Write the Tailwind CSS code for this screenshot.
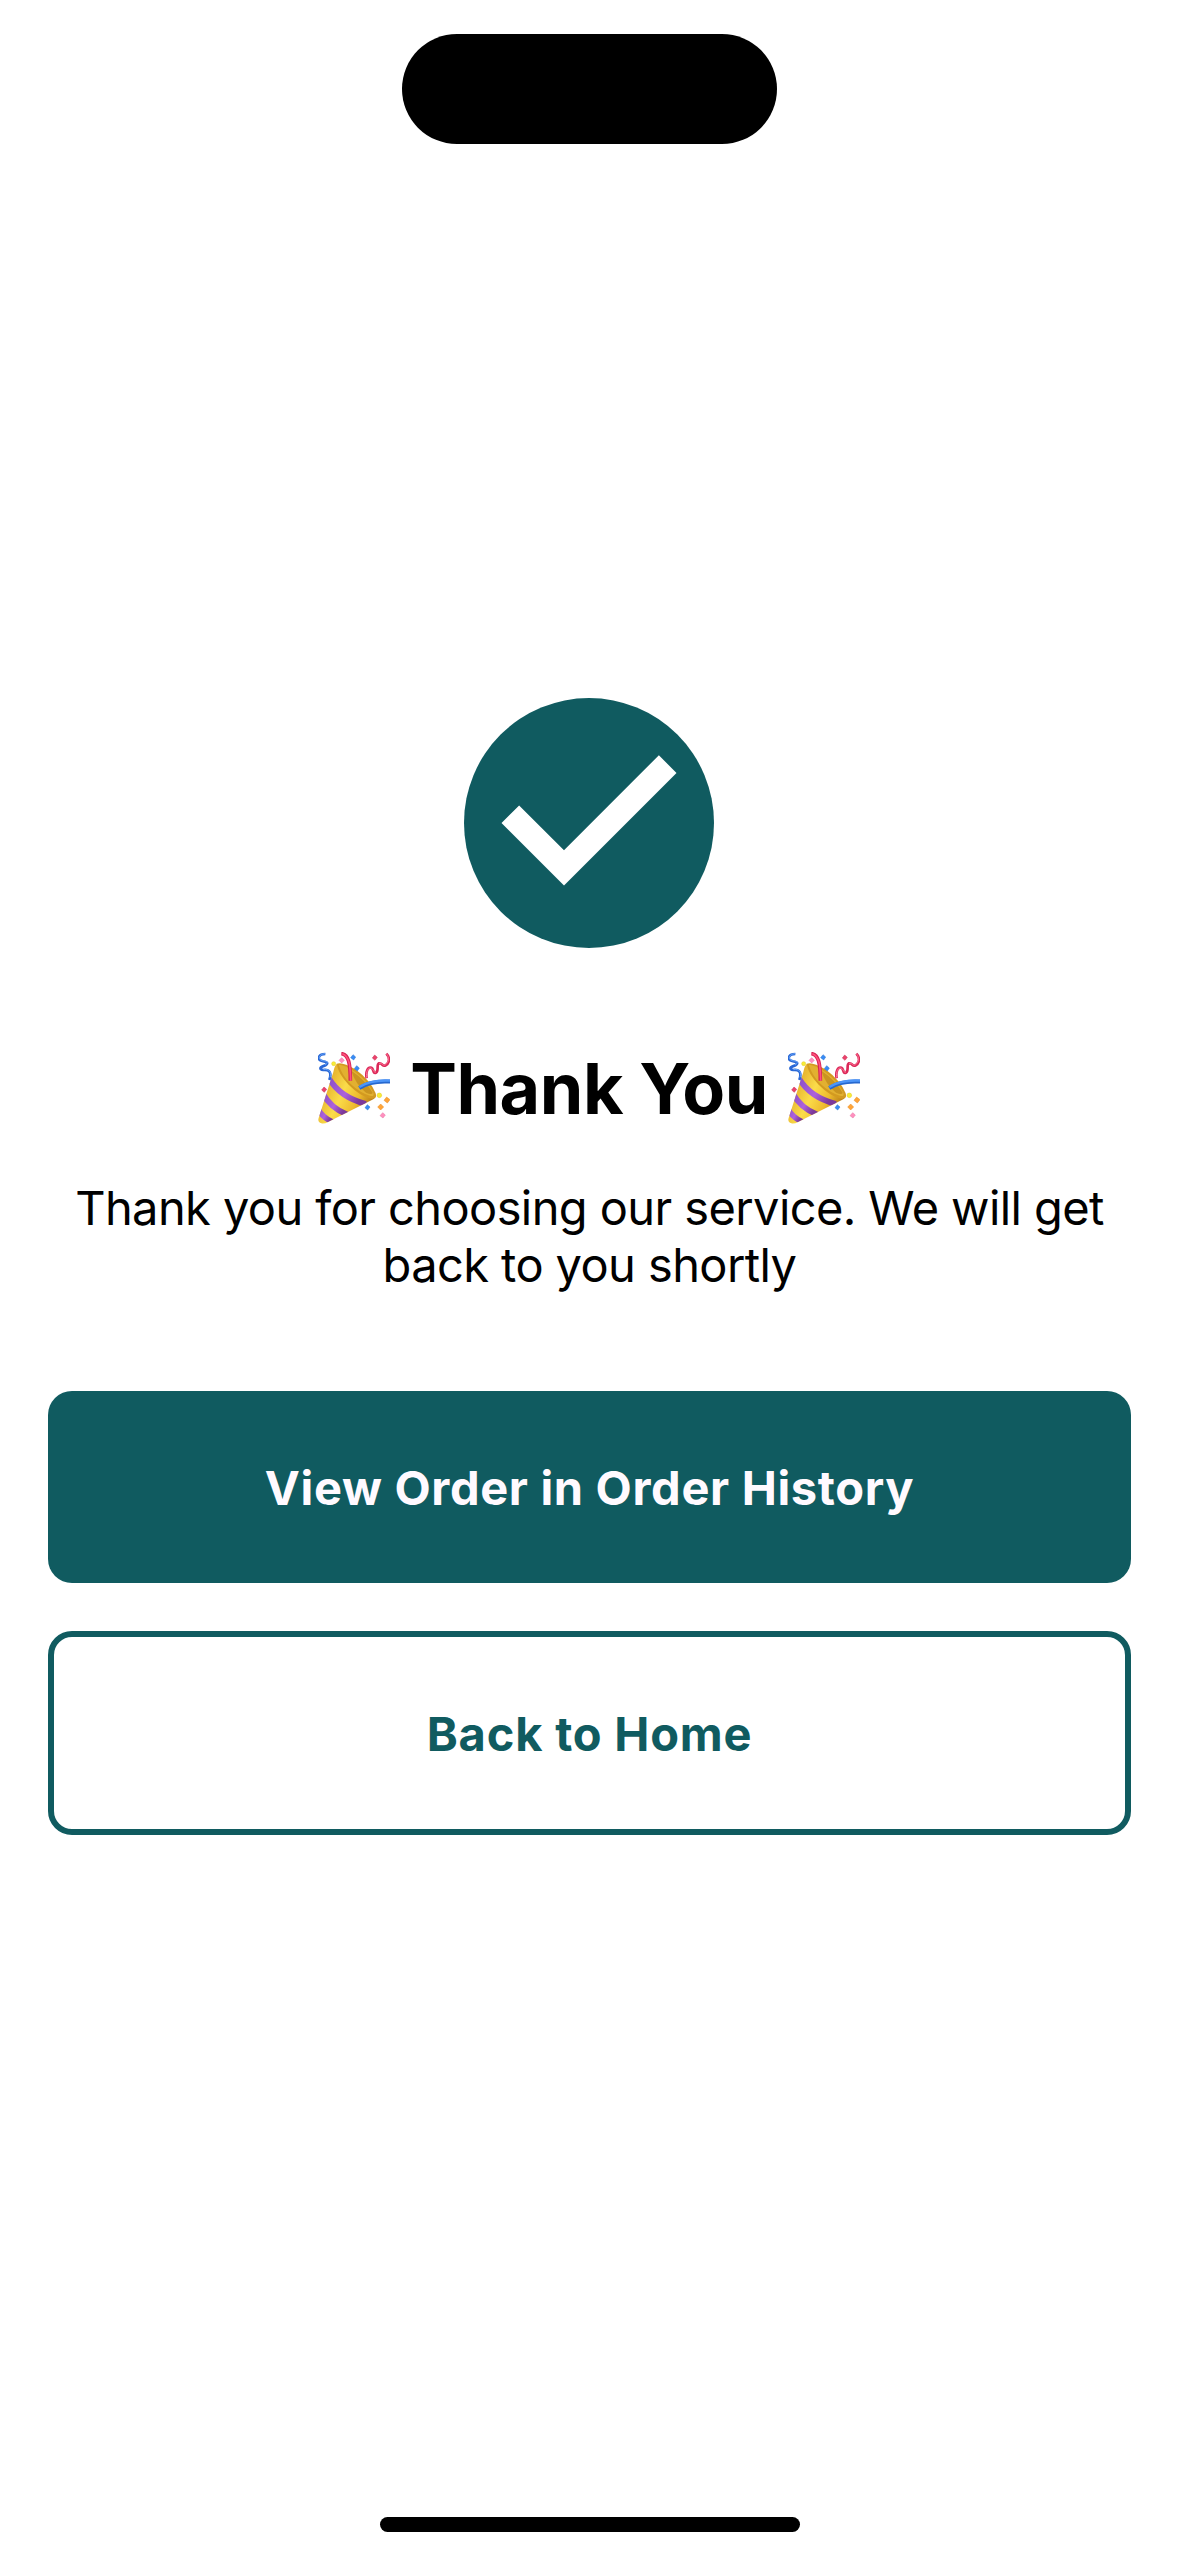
<!DOCTYPE html>
<html lang="en"><head><meta charset="utf-8"><title>Thank You</title>
<script src="https://cdn.jsdelivr.net/npm/@tailwindcss/browser@4"></script></head>
<body class="bg-white font-[Inter,sans-serif] text-black">
<svg class="absolute size-0"><defs>
<linearGradient id="gold" x1="0" y1="0.2" x2="1" y2="0.7"><stop offset="0" stop-color="#d99a1c"/><stop offset=".45" stop-color="#fbdc4a"/><stop offset=".7" stop-color="#eebb2e"/><stop offset="1" stop-color="#a8690f"/></linearGradient>
<linearGradient id="purple" x1="0" y1="0" x2="1" y2="0.5"><stop offset="0" stop-color="#8a4fc8"/><stop offset=".6" stop-color="#ad62dc"/><stop offset="1" stop-color="#7c3a9c"/></linearGradient>
<clipPath id="cone"><path d="M80 72Q74 76 70 96L26 234Q22 246 34 250Q44 252 54 246L190 178Q200 172 196 162Q150 150 80 72Z"/></clipPath>
<symbol id="popper" viewBox="24 36 216 216">
<path d="M80 72Q74 76 70 96L26 234Q22 246 34 250Q44 252 54 246L190 178Q200 172 196 162Q150 150 80 72Z" fill="url(#gold)"/>
<g clip-path="url(#cone)" fill="none" stroke="url(#purple)" stroke-width="17"><path d="M56 114Q90 172 168 192"/><path d="M38 160Q62 204 112 224"/><path d="M22 204Q36 232 68 246"/></g>
<path d="M80 71Q96 64 136 88Q182 122 197 160Q202 178 184 176Q152 170 116 134Q84 100 80 71Z" fill="#d39a20"/>
<path d="M86 74Q104 74 136 96Q174 124 190 158Q194 170 182 168Q152 160 122 132Q96 106 86 74Z" fill="#e2b030"/>
<path d="M124 92Q166 120 188 158Q186 166 168 158Q136 132 124 92Z" fill="#c99420"/>
<g fill="none">
<path d="M94 41Q110 42 116 64Q121 82 121 122" stroke="#d72455" stroke-width="11"/>
<path d="M97 41Q112 46 118 70Q121 88 122 122" stroke="#ff527c" stroke-width="5"/>
<path d="M148 144Q184 120 244 125" stroke="#2668cf" stroke-width="12"/>
<path d="M148 141Q184 118 244 122" stroke="#4c95f8" stroke-width="7"/>
<path d="M46 42C24 42 20 60 36 63C52 66 56 69 46 76C30 80 26 88 40 90C58 88 66 97 58 120" stroke="#2866d5" stroke-width="8"/>
<path d="M46 41C26 42 22 58 37 62C54 64 56 68 45 75M40 89C58 86 66 96 60 112" stroke="#6aa9fb" stroke-width="3"/>
<path d="M170 115C166 94 174 80 184 83C192 87 188 102 198 98C208 92 198 74 207 70C218 68 217 82 227 76C240 68 240 52 229 41" stroke="#db2858" stroke-width="8"/>
<path d="M170 113C167 94 175 82 183 84C192 88 190 99 198 96M207 70C218 68 218 80 227 74C237 66 238 52 230 42" stroke="#ff7597" stroke-width="3"/>
</g>
<g stroke-width="1.5">
<g fill="#f8ee36" stroke="#e2c725"><circle cx="71" cy="71" r="6"/><circle cx="208" cy="166" r="7"/></g>
<g fill="#ff8fbe" stroke="#e770a2"><path d="M95 53l8 8-8 8-8-8zM218 218l8 7-7 9-9-7z"/></g>
<g fill="#378cf5" stroke="#286fce"><path d="M129 44l8 7-6 9-9-7zM140 77l8 7-6 9-9-7zM172 194l8 7-7 9-8-7z"/></g>
<g fill="#ec426c" stroke="#c52c51"><path d="M194 45l8 7-7 9-8-7zM42 141l8 7-7 9-8-7z"/></g>
<g fill="#ffa438" stroke="#e58a22"><path d="M230 171l10 8-8 10-10-8zM212 192l9 9-9 9-9-9z"/></g>
</g></symbol></defs></svg>
<main class="flex h-[2556px] w-[1179px] flex-col items-center px-12">
<div class="mt-[34px] h-[110px] w-[375px] shrink-0 rounded-full bg-black"></div>
<svg class="mt-[529px] mr-px size-[300px] shrink-0" viewBox="0 0 24 24"><circle cx="12" cy="12" r="10" fill="#105b60"/><path d="M10 17L5 12l1.41-1.41L10 14.17l7.59-7.59L19 8z" fill="#fff"/></svg>
<div class="mt-[74px] mr-px flex h-[82px] items-center">
<svg class="size-[72px]" role="img" aria-label="Party popper"><use href="#popper"/></svg>
<h1 class="mx-5 pt-[2px] text-[70px] leading-[82px] font-bold tracking-[-0.45px] whitespace-nowrap">Thank You</h1>
<svg class="size-[72px]" role="img" aria-label="Party popper"><use href="#popper"/></svg>
</div>
<p class="mt-[50px] text-center text-[47px] leading-[57px] tracking-[-0.59px] whitespace-nowrap">Thank you for choosing our service. We will get<br>back to you shortly</p>
<button class="mt-[98px] h-48 w-full shrink-0 rounded-3xl bg-[#105b60] pt-[3px] text-[47px] font-bold tracking-[0.66px] text-[#fffaff]">View Order in Order History</button>
<button class="mt-12 h-[204px] w-full shrink-0 rounded-3xl border-6 border-[#105b60] pt-[3px] text-[47px] font-bold tracking-[0.8px] text-[#105b60]">Back to Home</button>
<div class="mt-[682px] h-[15px] w-[420px] shrink-0 rounded-full bg-black"></div>
</main>
</body></html>
